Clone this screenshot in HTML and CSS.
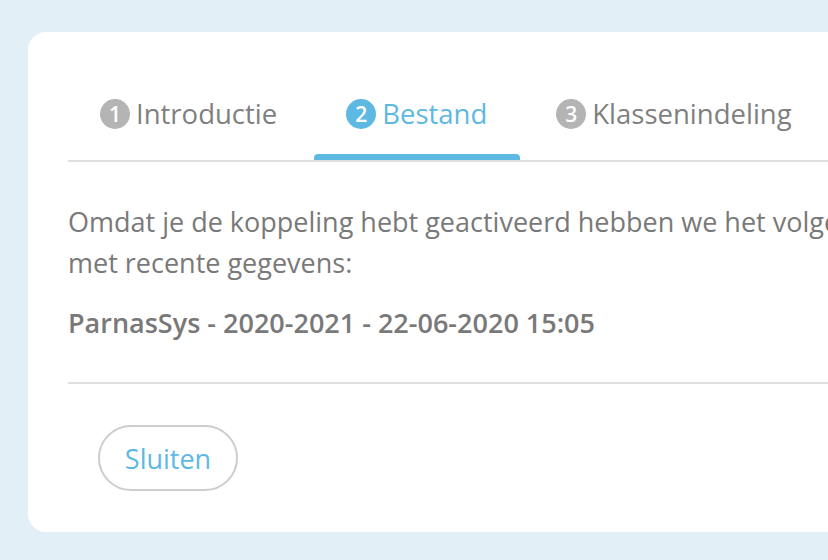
FILE: index.html
```html
<!DOCTYPE html>
<html lang="nl">
<head>
  <meta charset="UTF-8" />
  <meta name="viewport" content="width=device-width, initial-scale=1" />
  <title>Koppeling | Bestand</title>
  <link rel="stylesheet" href="styles.css">
</head>
<body>

  <div class="page">
    <div class="modal">
      <!-- Stappen van de wizard -->
      <nav class="tabs">
        <div class="tab"><span class="step">1</span>Introductie</div>
        <div class="tab active"><span class="step">2</span>Bestand</div>
        <div class="tab"><span class="step">3</span>Klassenindeling</div>
      </nav>

      <div class="modal-body">
        <p>Omdat je de koppeling hebt geactiveerd hebben we het volgende bestand ingeladen<br />met recente gegevens:</p>
        <p class="bestand">ParnasSys - 2020-2021 - 22-06-2020 15:05</p>
      </div>

      <div class="modal-footer">
        <button class="btn-close">Sluiten</button>
      </div>
    </div>
  </div>

</body>
</html>
```

FILE: styles.css
```css
/* Reset básico */
* {
  margin: 0;
  padding: 0;
  box-sizing: border-box;
  font-family: 'Open Sans', 'Noto Sans', sans-serif;
}

body {
  background: #e3eff6;
  color: #797979;
  overflow: hidden;
  height: 560px;
}

.page {
  padding: 32px 0 0 28px;
}

/* Modal wit vlak */
.modal {
  width: 1300px;
  background: #fff;
  border-radius: 18px;
  padding-left: 40px;
}

/* Tabs bovenaan */
.tabs {
  display: flex;
  gap: 4px;
  border-bottom: 2px solid #dedede;
}

.tab {
  position: relative;
  display: flex;
  align-items: center;
  gap: 6px;
  padding: 62px 33px 26px 32px;
  font-size: 27.5px;
  line-height: 40px;
  color: #7f7f7f;
}

.tab .step {
  width: 30px;
  height: 30px;
  border-radius: 50%;
  background: #b4b4b4;
  color: #fff;
  font-size: 21px;
  font-weight: 600;
  line-height: 30px;
  text-align: center;
}

.tab.active {
  color: #5db9e2;
}

.tab.active .step {
  background: #5db9e2;
}

.tab.active::after {
  content: "";
  position: absolute;
  left: 0;
  right: 0;
  bottom: 0;
  height: 6px;
  background: #5db9e2;
  border-radius: 4px 4px 0 0;
}

/* Inhoud */
.modal-body {
  padding: 39px 0 39px;
  border-bottom: 2px solid #dedede;
  font-size: 27px;
  line-height: 41px;
}

.modal-body .bestand {
  margin-top: 19px;
  font-weight: 600;
}

/* Knoppen */
.modal-footer {
  padding: 41px 0 41px 30px;
}

.btn-close {
  width: 140px;
  height: 66px;
  border: 2px solid #cdcdcd;
  border-radius: 33px;
  background: #fff;
  color: #5db9e2;
  font-size: 27px;
  cursor: pointer;
}
```
